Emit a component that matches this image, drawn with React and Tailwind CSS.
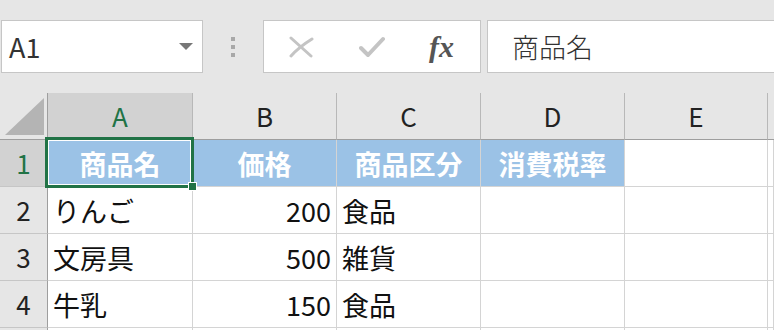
const FONT = { fontFamily: '"Noto Sans CJK JP", "Noto Sans", sans-serif' };

const cols = ['A', 'B', 'C', 'D', 'E', ''];

const rows = [
  { n: '1', cells: ['商品名', '価格', '商品区分', '消費税率', '', ''], head: true },
  { n: '2', cells: ['りんご', '200', '食品', '', '', ''] },
  { n: '3', cells: ['文房具', '500', '雑貨', '', '', ''] },
  { n: '4', cells: ['牛乳', '150', '食品', '', '', ''] },
  { n: '', cells: ['', '', '', '', '', ''] },
];

function NameBox() {
  return (
    <div className="ml-px flex h-[53px] w-[202px] items-center justify-between border border-[#c6c6c6] bg-white pl-[7px] pr-[9px]">
      <span className="text-[27px] leading-none text-[#333]">A1</span>
      <svg width="14" height="7" viewBox="0 0 14 7">
        <path d="M0 0 L14 0 L7 7 Z" fill="#777" />
      </svg>
    </div>
  );
}

function Dots() {
  return (
    <div className="flex w-[60px] flex-col items-center gap-[4px]">
      <div className="h-[4px] w-[4px] bg-[#a8a8a8]" />
      <div className="h-[4px] w-[4px] bg-[#a8a8a8]" />
      <div className="h-[4px] w-[4px] bg-[#a8a8a8]" />
    </div>
  );
}

function FormulaButtons() {
  return (
    <div className="flex h-[53px] w-[218px] items-center border border-[#c6c6c6] bg-white">
      <div className="ml-[24px] flex w-[26px] justify-center">
        <svg width="25" height="22" viewBox="0 0 25 22">
          <path d="M2 2 L22 20 M2 20 Q10 11 23 3" stroke="#c4c4c4" strokeWidth="3" fill="none" strokeLinecap="round" />
        </svg>
      </div>
      <div className="ml-[45px] flex w-[26px] justify-center">
        <svg width="26" height="22" viewBox="0 0 26 22">
          <path d="M2 12 L9 19 L24 3" stroke="#c4c4c4" strokeWidth="4" fill="none" strokeLinecap="round" strokeLinejoin="round" />
        </svg>
      </div>
      <div
        className="ml-[44px] text-[30px] font-semibold italic leading-none text-[#555]"
        style={{ fontFamily: '"Liberation Serif", serif' }}
      >
        fx
      </div>
    </div>
  );
}

function FormulaBar() {
  return (
    <div className="ml-[6px] flex h-[53px] flex-1 items-center border border-[#c6c6c6] border-r-0 bg-white pl-[24px]">
      <span className="text-[27px] font-light leading-none text-[#333]">商品名</span>
    </div>
  );
}

export default function App() {
  return (
    <div className="h-[330px] w-[774px] overflow-hidden bg-[#e6e6e6]" style={FONT}>
      <div className="flex h-[93px] items-start pt-[20px]">
        <NameBox />
        <div className="flex h-[53px] items-center">
          <Dots />
        </div>
        <FormulaButtons />
        <FormulaBar />
      </div>

      <div className="grid grid-cols-[48px_145px_144px_144px_144px_143px_1fr] grid-rows-[47px_47px_47px_47px_47px_47px]">
        <div className="flex items-end justify-end border-b border-r border-[#9e9e9e] bg-[#e6e6e6] pb-[4px] pr-[3px]">
          <svg width="39" height="37" viewBox="0 0 39 37">
            <path d="M39 0 L39 37 L0 37 Z" fill="#b4b4b4" />
          </svg>
        </div>
        {cols.map((c, i) => (
          <div
            key={c + i}
            className={`flex items-center justify-center border-b border-b-[#9e9e9e] text-[26px] leading-none ${
              i === 5 ? '' : 'border-r border-r-[#b8b8b8]'
            } ${i === 0 ? 'bg-[#d2d2d2] text-[#217346]' : 'bg-[#e6e6e6] text-[#222]'}`}
          >
            {c}
          </div>
        ))}

        {rows.map((r, idx) => (
          <Row key={idx} row={r} />
        ))}
      </div>
    </div>
  );
}

function Row({ row }) {
  const selected = row.n === '1';
  return (
    <>
      <div
        className={`flex items-center justify-center border-b border-r border-b-[#c6c6c6] border-r-[#9e9e9e] text-[26px] leading-none ${
          selected ? 'bg-[#d2d2d2] text-[#217346]' : 'bg-[#e6e6e6] text-[#222]'
        }`}
      >
        {row.n}
      </div>
      {row.cells.map((v, i) => {
        const blue = row.head && i < 4;
        const num = !row.head && i === 1;
        const sel = row.head && i === 0;
        return (
          <div
            key={i}
            className={`flex items-center border-b border-r border-[#d4d4d4] text-[27px] leading-none ${
              blue ? 'justify-center bg-[#9bc2e6] font-bold text-white' : 'bg-white text-[#111]'
            } ${num ? 'justify-end pr-[5px]' : ''} ${!blue && !num ? 'pl-[5px]' : ''} ${sel ? 'relative z-10' : ''}`}
          >
            {v}
            {sel && (
              <>
                <div className="absolute -left-[3px] -top-[3px] bottom-[-2px] right-[-2px] border-[3px] border-[#217346]">
                  <div className="h-full w-full border border-white" />
                </div>
                <div className="absolute bottom-[-5px] right-[-5px] h-[9px] w-[9px] border border-white bg-[#217346]" />
              </>
            )}
          </div>
        );
      })}
    </>
  );
}
